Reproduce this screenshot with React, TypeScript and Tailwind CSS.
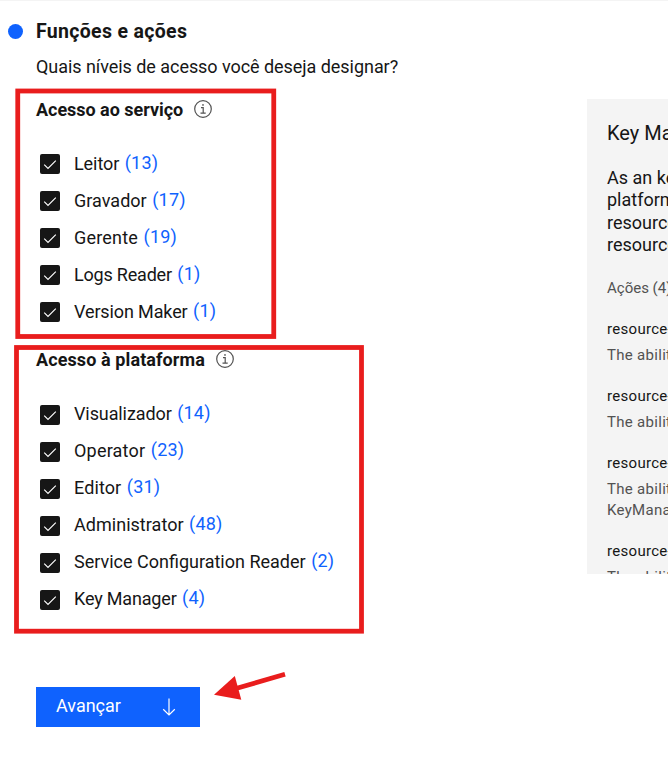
type Role = { name: string; count: number; tracking: string };

const serviceRoles: Role[] = [
  { name: 'Leitor', count: 13, tracking: 'tracking-[-0.08px]' },
  { name: 'Gravador', count: 17, tracking: 'tracking-[0.02px]' },
  { name: 'Gerente', count: 19, tracking: 'tracking-[0.2px]' },
  { name: 'Logs Reader', count: 1, tracking: 'tracking-[-0.2px]' },
  { name: 'Version Maker', count: 1, tracking: 'tracking-[-0.12px]' },
];

const platformRoles: Role[] = [
  { name: 'Visualizador', count: 14, tracking: 'tracking-[-0.1px]' },
  { name: 'Operator', count: 23, tracking: 'tracking-[0.2px]' },
  { name: 'Editor', count: 31, tracking: 'tracking-[0.1px]' },
  { name: 'Administrator', count: 48, tracking: 'tracking-[0.03px]' },
  { name: 'Service Configuration Reader', count: 2, tracking: 'tracking-[0px]' },
  { name: 'Key Manager', count: 4, tracking: 'tracking-[-0.17px]' },
];

const actions = [
  { name: 'resource-controller', lines: ['The ability to view'] },
  { name: 'resource-controller', lines: ['The ability to edit'] },
  { name: 'resource-controller', lines: ['The ability to list', 'KeyManager keys'] },
  { name: 'resource-controller', lines: ['The ability to create'] },
];

function InfoIcon() {
  return (
    <svg className="mt-[9px] h-[18px] w-[18px] shrink-0" viewBox="0 0 18 18" fill="none" stroke="#525252">
      <circle cx="9" cy="9" r="8.3" strokeWidth="1.2" />
      <path d="M7 7.7h2.2v5.3M6.5 13.1h5.2" strokeWidth="1.2" />
      <circle cx="9" cy="4.9" r="0.85" fill="#525252" stroke="none" />
    </svg>
  );
}

function RoleRow({ name, count, tracking, boxOffset }: Role & { boxOffset: string }) {
  return (
    <li className="flex h-[37px] items-start pl-1">
      <span className={`${boxOffset} flex h-5 w-5 shrink-0 rounded-[2px] bg-[#161616]`}>
        <svg className="h-5 w-5" viewBox="0 0 20 20" fill="none" stroke="#fff" strokeWidth="1.15">
          <path d="M4.2 10.7 8 14.5 15.8 6.7" />
        </svg>
      </span>
      <span className={`ml-3.5 leading-[37px] ${tracking}`}>{name}</span>
      <span className="ml-[5.5px] leading-[35px] tracking-[0.2px] text-[#0f62fe]">({count})</span>
    </li>
  );
}

type RoleGroupProps = { title: string; roles: Role[]; tracking: string; boxOffset: string };

function RoleGroup({ title, roles, tracking, boxOffset }: RoleGroupProps) {
  return (
    <section>
      <div className="flex h-9 gap-[11px]">
        <h3 className={`font-bold leading-[38px] ${tracking}`}>{title}</h3>
        <InfoIcon />
      </div>
      <ul className="mt-[18px]">
        {roles.map((role) => (
          <RoleRow key={role.name} {...role} boxOffset={boxOffset} />
        ))}
      </ul>
    </section>
  );
}

export default function App() {
  return (
    <div className="relative h-[757px] w-[668px] overflow-hidden border-t border-[#f4f4f4] bg-white font-[Roboto,sans-serif] text-[18px] whitespace-nowrap text-[#161616]">
      <div className="flex">
        <main className="w-[587px] shrink-0 pl-9">
          <div className="mt-[15px] -ml-7 flex h-[30px] items-center">
            <span className="mr-[13px] h-[15px] w-[15px] rounded-full bg-[#0f62fe]" />
            <h2 className="pt-[2px] text-[19.5px] font-bold leading-[30px] tracking-[0.32px]">Funções e ações</h2>
          </div>
          <p className="mt-[6px] leading-[30px] tracking-[-0.05px]">Quais níveis de acesso você deseja designar?</p>
          <div className="mt-[9px]">
            <RoleGroup
              title="Acesso ao serviço"
              roles={serviceRoles}
              tracking="tracking-[-0.03px]"
              boxOffset="mt-[9px]"
            />
          </div>
          <div className="mt-[11px]">
            <RoleGroup
              title="Acesso à plataforma"
              roles={platformRoles}
              tracking="tracking-[0.1px]"
              boxOffset="mt-[10px]"
            />
          </div>
          <button className="mt-[70px] flex h-10 w-[164px] items-center justify-between bg-[#0f62fe] pr-[22px] pl-5 text-white">
            <span className="pb-[3px]">Avançar</span>
            <svg className="h-[18px] w-[18px]" viewBox="0 0 18 18" fill="none" stroke="#fff" strokeWidth="1.2">
              <path d="M9 0.5v16.3M3.2 11.3 9 17l5.8-5.7" />
            </svg>
          </button>
        </main>

        <aside className="mt-[98px] h-[475px] w-[81px] shrink-0 overflow-hidden bg-[#f4f4f4] pl-5">
          <h3 className="mt-[19px] text-[20px] leading-[30px]">Key Manager</h3>
          <p className="mt-[19px] leading-[22.4px]">
            As an key manager
            <br />
            platform actions
            <br />
            resources and
            <br />
            resource keys
          </p>
          <p className="mt-[21px] text-[15px] leading-5 text-[#525252]">Ações (4)</p>
          <ul className="mt-[21px] text-[15px] leading-[21px] tracking-[0.3px]">
            {actions.map((action, index) => (
              <li key={index} className="mb-5">
                <p>{action.name}</p>
                <div className="mt-[5px] text-[#525252]">
                  {action.lines.map((line) => (
                    <p key={line}>{line}</p>
                  ))}
                </div>
              </li>
            ))}
          </ul>
        </aside>
      </div>

      {/* Annotations drawn over the page */}
      <svg className="pointer-events-none absolute -top-px left-0 h-[757px] w-[668px]" viewBox="0 0 668 757" fill="none">
        <rect x="17.75" y="91" width="256" height="245.5" stroke="#e91d1d" strokeWidth="4.8" />
        <rect x="16.5" y="347.5" width="345" height="283.7" stroke="#e91d1d" strokeWidth="4.8" />
        <path d="M285 674.3 236.8 688.2" stroke="#e91d1d" strokeWidth="4.8" />
        <path d="M214 694.7 234.8 676 241.3 699.8Z" fill="#e91d1d" />
      </svg>
    </div>
  );
}
